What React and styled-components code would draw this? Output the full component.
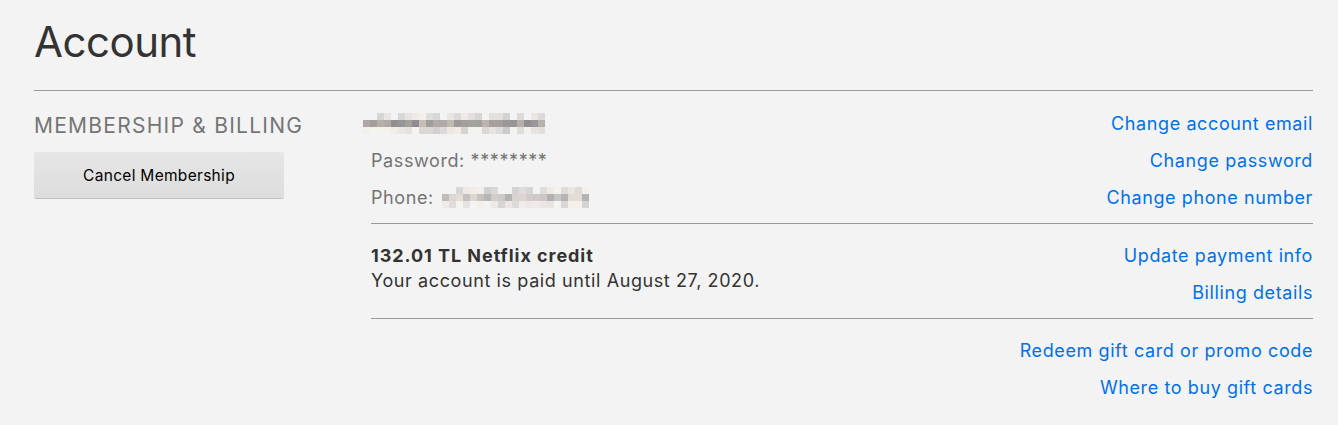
import React from 'react';
import styled, { createGlobalStyle } from 'styled-components';

const GlobalStyle = createGlobalStyle`
  html, body {
    margin: 0;
    padding: 0;
    background: #f3f3f3;
  }
  body {
    font-family: Inter, "Noto Sans", "Liberation Sans", sans-serif;
    color: #333;
  }
`;

const Page = styled.div`
  padding: 0 25px 0 34px;
`;

const Title = styled.h1`
  margin: 0;
  padding-top: 17px;
  font-size: 42px;
  font-weight: 400;
  line-height: 50px;
  color: #333;
  letter-spacing: -0.5px;
  border-bottom: 1px solid #999;
  padding-bottom: 23px;
`;

const Section = styled.section`
  display: grid;
  grid-template-columns: 337px 1fr;
  padding-top: 1px;
`;

const SideCol = styled.div`
  display: flex;
  flex-direction: column;
  align-items: flex-start;
`;

const SectionHeading = styled.h2`
  margin: 20px 0 12px;
  font-size: 21px;
  font-weight: 400;
  line-height: 28px;
  letter-spacing: 1.25px;
  color: #757575;
`;

const CancelButton = styled.button`
  width: 250px;
  height: 46px;
  border: none;
  border-radius: 2px;
  background: linear-gradient(180deg, #e6e6e6 0%, #dddddd 100%);
  box-shadow: 0 1px 0 rgba(0, 0, 0, 0.2);
  font-family: inherit;
  font-size: 15.5px;
  letter-spacing: 0.3px;
  color: #000;
  cursor: pointer;
`;

const Blocks = styled.div`
  display: flex;
  flex-direction: column;
`;

const Block = styled.div`
  display: flex;
  justify-content: space-between;
  padding: 13px 0 7px;
  border-bottom: ${p => (p.$last ? 'none' : '1px solid #999')};
`;

const InfoCol = styled.div`
  display: flex;
  flex-direction: column;
  padding-top: ${p => p.$offset || 0}px;
`;

const LinkCol = styled.div`
  display: flex;
  flex-direction: column;
  align-items: flex-end;
`;

const Row = styled.div`
  height: 37px;
  display: flex;
  align-items: center;
  font-size: 18px;
  letter-spacing: 0.6px;
  color: #737373;
  gap: 8px;
`;

const Line = styled.div`
  font-size: 18px;
  line-height: 25px;
  letter-spacing: ${p => (p.$bold ? '0.95px' : '0.6px')};
  color: #333;
  font-weight: ${p => (p.$bold ? 700 : 400)};
`;

const Link = styled.a`
  height: 37px;
  display: flex;
  align-items: center;
  font-size: 18px;
  letter-spacing: 0.6px;
  color: #0071eb;
  text-decoration: none;
  cursor: pointer;
`;

const Mosaic = styled.div`
  display: grid;
  grid-template-columns: repeat(${p => p.$cols}, ${p => p.$cell}px);
  grid-auto-rows: ${p => p.$cell}px;
  filter: blur(0.7px);
  margin-left: ${p => p.$shift || 0}px;
`;

const Cell = styled.span`
  display: block;
`;

function makeCells(cols, rows, seed, profile) {
  const cells = [];
  let s = seed;
  for (let r = 0; r < rows; r++) {
    for (let c = 0; c < cols; c++) {
      s = (s * 9301 + 49297) % 233280;
      const rnd = s / 233280;
      const base = profile[r];
      const v = Math.round(base + rnd * 50 - 25);
      const warm = Math.round(rnd * 10);
      cells.push(`rgb(${Math.min(243, v + warm)}, ${Math.min(243, v)}, ${Math.min(243, v - warm + 2)})`);
    }
  }
  return cells;
}

const emailCells = makeCells(26, 3, 17, [234, 165, 225]);
const phoneCells = makeCells(21, 3, 41, [230, 200, 232]);

const Blurred = ({ cells, cols, cell, shift }) => (
  <Mosaic $cols={cols} $cell={cell} $shift={shift}>
    {cells.map((c, i) => (
      <Cell key={i} style={{ background: c }} />
    ))}
  </Mosaic>
);

export default function App() {
  return (
    <>
      <GlobalStyle />
      <Page>
        <Title>Account</Title>
        <Section>
          <SideCol>
            <SectionHeading>MEMBERSHIP &amp; BILLING</SectionHeading>
            <CancelButton>Cancel Membership</CancelButton>
          </SideCol>
          <Blocks>
            <Block>
              <InfoCol>
                <Row>
                  <Blurred cells={emailCells} cols={26} cell={7} shift={-8} />
                </Row>
                <Row>Password: ********</Row>
                <Row>
                  Phone:
                  <Blurred cells={phoneCells} cols={21} cell={7} />
                </Row>
              </InfoCol>
              <LinkCol>
                <Link>Change account email</Link>
                <Link>Change password</Link>
                <Link>Change phone number</Link>
              </LinkCol>
            </Block>
            <Block>
              <InfoCol $offset={6}>
                <Line $bold>132.01 TL Netflix credit</Line>
                <Line>Your account is paid until August 27, 2020.</Line>
              </InfoCol>
              <LinkCol>
                <Link>Update payment info</Link>
                <Link>Billing details</Link>
              </LinkCol>
            </Block>
            <Block $last>
              <InfoCol />
              <LinkCol>
                <Link>Redeem gift card or promo code</Link>
                <Link>Where to buy gift cards</Link>
              </LinkCol>
            </Block>
          </Blocks>
        </Section>
      </Page>
    </>
  );
}
